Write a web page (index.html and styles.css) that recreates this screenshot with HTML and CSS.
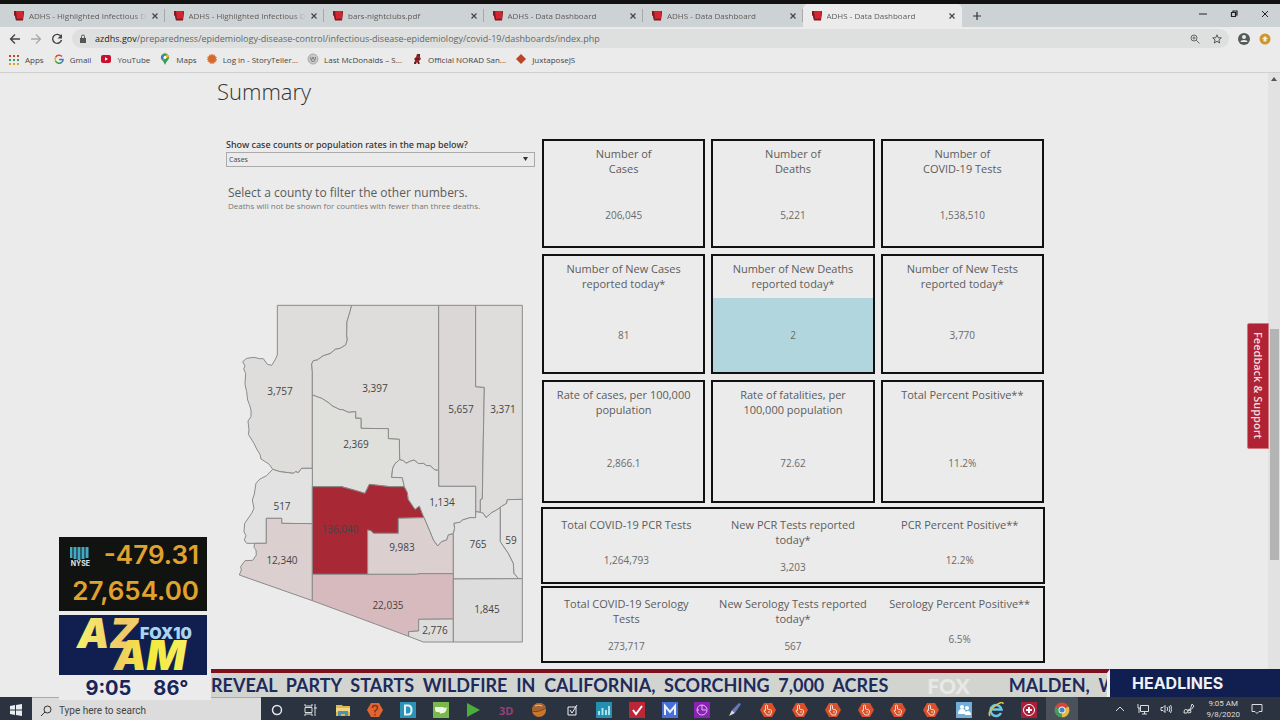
FILE: index.html
```
<!DOCTYPE html>
<html lang="en">
<head>
  <meta charset="UTF-8">
  <meta name="viewport" content="width=device-width, initial-scale=1.0">
  <title>ADHS - Data Dashboard</title>
  <link rel="stylesheet" href="styles.css">
</head>
<body>
  <!-- shared icons -->
  <svg class="defs" width="0" height="0">
    <symbol id="adhs" viewBox="0 0 12 12">
      <path d="M1 1h10l-1 9H3L2 6 1 5z" fill="#cf2630"/>
      <path d="M1 1h2l1 8 6-.5v2H3L2 6 1 5zM10 2l1-1-1 9z" fill="#7a1a22"/>
    </symbol>
    <symbol id="close" viewBox="0 0 8 8">
      <path d="M1.500 1.500l5 5M6.500 1.500l-5 5" stroke="#444" stroke-width="1.200"/>
    </symbol>
    <symbol id="hex" viewBox="0 0 16 16">
      <path d="M4 1h8l4 7-4 7H4L0 8z" fill="#d9502a"/>
      <path d="M5.500 8.500V3.500q1-1 2 0V7l3.500 1q.8 .5 .5 2L10.500 13H7L4 9q.5-1.500 1.500-.5M9 9v2" fill="none" stroke="#f6d9cc"/>
    </symbol>
  </svg>

  <header class="browser">
    <div class="tab-bar">
      <div class="tabs">
        <div class="tab"><svg class="fav"><use href="#adhs"/></svg><span>ADHS - Highlighted Infectious Di</span><button aria-label="Close tab"><svg><use href="#close"/></svg></button></div>
        <div class="tab"><svg class="fav"><use href="#adhs"/></svg><span>ADHS - Highlighted Infectious Di</span><button aria-label="Close tab"><svg><use href="#close"/></svg></button></div>
        <div class="tab"><svg class="fav"><use href="#adhs"/></svg><span>bars-nightclubs.pdf</span><button aria-label="Close tab"><svg><use href="#close"/></svg></button></div>
        <div class="tab"><svg class="fav"><use href="#adhs"/></svg><span>ADHS - Data Dashboard</span><button aria-label="Close tab"><svg><use href="#close"/></svg></button></div>
        <div class="tab"><svg class="fav"><use href="#adhs"/></svg><span>ADHS - Data Dashboard</span><button aria-label="Close tab"><svg><use href="#close"/></svg></button></div>
        <div class="tab active"><svg class="fav"><use href="#adhs"/></svg><span>ADHS - Data Dashboard</span><button aria-label="Close tab"><svg><use href="#close"/></svg></button></div>
      </div>
      <button class="new-tab" aria-label="New tab"><svg width="10" height="10" viewBox="0 0 10 10"><path d="M5 1v8M1 5h8" stroke="#333" stroke-width="1.200"/></svg></button>
      <div class="window-buttons">
        <button aria-label="Minimize"><svg viewBox="0 0 8 8"><path d="M0 4h8" stroke="#222"/></svg></button>
        <button aria-label="Restore"><svg viewBox="0 0 8 8"><path d="M1.500 2.500h4v4h-4zM3 2.500V1h4v4H5.500" fill="none" stroke="#222" stroke-width="1.200"/></svg></button>
        <button aria-label="Close"><svg viewBox="0 0 8 8"><path d="M1 1l6 6M7 1L1 7" stroke="#222"/></svg></button>
      </div>
    </div>

    <div class="toolbar">
      <button aria-label="Back"><svg viewBox="0 0 12 12"><path d="M11 6H2M6 1.500L1.500 6 6 10.500" fill="none" stroke="#444" stroke-width="1.300"/></svg></button>
      <button aria-label="Forward"><svg viewBox="0 0 12 12"><path d="M1 6h9M6 1.500L10.500 6 6 10.500" fill="none" stroke="#aaa" stroke-width="1.300"/></svg></button>
      <button aria-label="Reload"><svg viewBox="0 0 12 12"><path d="M10 3.500A4.500 4.500 0 1 0 10.500 7" fill="none" stroke="#444" stroke-width="1.400"/><path d="M11 1v4.500H6.500z" fill="#444"/></svg></button>
      <div class="address">
        <svg width="8" height="9" viewBox="0 0 8 9"><path d="M1 4h6v5H1z" fill="#555"/><path d="M2.500 4V2.500a1.500 1.500 0 0 1 3 0V4" fill="none" stroke="#555"/></svg>
        <p><b>azdhs.gov</b>/preparedness/epidemiology-disease-control/infectious-disease-epidemiology/covid-19/dashboards/index.php</p>
        <svg width="10" height="10" viewBox="0 0 10 10"><circle cx="4" cy="4" r="3" fill="none" stroke="#666"/><path d="M6.200 6.200L9.500 9.500M2.500 4h3M4 2.500v3" stroke="#666"/></svg>
        <svg width="10" height="10" viewBox="0 0 10 10"><path d="M5 .8l1.200 2.900 3.100.2-2.400 2 .8 3.100L5 7.300 2.300 9l.8-3.100-2.400-2 3.100-.2z" fill="none" stroke="#555"/></svg>
      </div>
      <button aria-label="Profile"><svg viewBox="0 0 12 12"><circle cx="6" cy="6" r="6" fill="#555b5b"/><circle cx="6" cy="4" r="2" fill="#ebebeb"/><path d="M2.500 9q0-2 3.500-2t3.500 2z" fill="#ebebeb"/></svg></button>
      <button aria-label="Update"><svg viewBox="0 0 12 12"><circle cx="6" cy="6" r="5.500" fill="#cf962c"/><path d="M6 3l3 3H7.500v2.500h-3V6H3z" fill="#f3ecd8"/></svg></button>
    </div>

    <nav class="bookmarks">
      <a href="#"><svg viewBox="0 0 12 12"><path d="M1 3h10" stroke="#c9412f" stroke-width="2" stroke-dasharray="2 2"/><path d="M1 7h10" stroke="#3f9a55" stroke-width="2" stroke-dasharray="2 2"/><path d="M1 11h10" stroke="#d9a529" stroke-width="2" stroke-dasharray="2 2"/></svg>Apps</a>
      <a href="#"><svg viewBox="0 0 12 12" fill="none" stroke-width="1.600"><path d="M9 3.500a4 4 0 0 0-6.500 1" stroke="#dc4a3d"/><path d="M2.500 4.500a4 4 0 0 0 0 3.500" stroke="#e6b325"/><path d="M2.500 8A4 4 0 0 0 9 9" stroke="#3a9b55"/><path d="M9 9q1-1 1-2.500H6" stroke="#4377d8"/></svg>Gmail</a>
      <a href="#"><svg viewBox="0 0 12 12"><rect x="1" y="2" width="10" height="8" rx="2" fill="#c8102e"/><path d="M5 4.200v3.600L8 6z" fill="#fff"/></svg>YouTube</a>
      <a href="#"><svg viewBox="0 0 12 12"><path d="M6 12Q5 9 3 7a4 4 0 1 1 6 0Q7 9 6 12z" fill="#3c9d58"/><path d="M3 7a4 4 0 0 1 0-5l3 2.500z" fill="#3f76d0"/><path d="M3 7l5-6q2 1 2 3z" fill="#e3b22f"/><circle cx="6" cy="4.500" r="1.400" fill="#fff"/></svg>Maps</a>
      <a href="#"><svg viewBox="0 0 12 12"><circle cx="6" cy="6" r="4" fill="#d9682b"/><circle cx="6" cy="6" r="4.500" fill="none" stroke="#d9682b" stroke-dasharray="1.500 1"/></svg>Log in - StoryTeller...</a>
      <a href="#"><svg viewBox="0 0 12 12"><circle cx="6" cy="6" r="5" fill="#c9c9c9" stroke="#aaa"/><path d="M3 4h6v2L7 9H5L3 6z" fill="#888"/><path d="M4 5h1M7 5h1M5 7h2" stroke="#eee"/></svg>Last McDonalds – S...</a>
      <a href="#"><svg viewBox="0 0 12 12"><path d="M6 1h3v3l1 2-2 2v3H7L6 9l-1 2H3l1-4-1-1 2-2z" fill="#9c2226"/><path d="M4 6h4M7 2h2M3 10h2M7 10h2" stroke="#222"/></svg>Official NORAD San...</a>
      <a href="#"><svg viewBox="0 0 12 12"><path d="M6 1l5 5-5 5-5-5z" fill="#bb4526"/></svg>JuxtaposeJS</a>
    </nav>
  </header>

  <div class="viewport">
    <main>
      <h1>Summary</h1>
      <div class="dashboard">
        <section class="map-panel">
          <label for="measure">Show case counts or population rates in the map below?</label>
          <div class="select">
            <select id="measure">
              <option>Cases</option>
              <option>Rates</option>
            </select>
            <svg width="5" height="4" viewBox="0 0 5 4"><path d="M0 0h5L2.500 4z" fill="#333"/></svg>
          </div>
          <p class="hint">Select a county to filter the other numbers.</p>
          <p class="note">Deaths will not be shown for counties with fewer than three deaths.</p>

          <svg class="map" viewBox="6 5 290 345">
            <g class="counties" transform="scale(0.33333)">
              <path fill="#dedddb" d="M142 31H365L360 50 351 80 350 120 352 135 347 150 330 160 316 163 300 176 280 182 262 195 250 197 245 207 247 230V520H215L205 533 197 530 190 535 175 533 150 530 128 523 118 508 93 492 90 478 80 462 72 445 55 418 57 405 54 378 63 365 63 345 58 328 53 315 50 290 45 268 47 235 41 222 45 213 38 200 50 190 72 187 88 191 100 191 112 208 125 211 135 195 142 180Z"/>
              <path fill="#dedddb" d="M365 31H626V526L615 525 600 512 590 512 580 505 566 506 552 495 540 499 528 505 520 497 509 494 508 433 475 431V401L393 400V370L377 369V350L355 352 338 344 330 344 305 332 300 326 275 310 247 300V230L245 207 250 197 262 195 280 182 300 176 316 163 330 160 347 150 352 135 350 120 351 80 360 50Z"/>
              <path fill="#dcd7d7" d="M626 31H737V275L763 277 760 430 757 612 751 614V652L737 650V574H626Z"/>
              <path fill="#dedddb" d="M737 31H877V613L832 614 830 625 815 634 800 645 785 653 768 668 760 655 751 652V614L757 612 760 430 763 277 737 275Z"/>
              <path fill="#dfdfdb" d="M247 300L275 310 300 326 305 332 330 344 338 344 355 352 377 350V370L393 370V400L475 401V431L508 433 509 494 495 506 488 520 485 547 517 548 523 575H480L418 568 405 595 375 586 335 575H247Z"/>
              <path fill="#e2e2e2" d="M128 523L150 530 175 533 190 535 197 530 205 533 215 520H247V686L155 685V670H109V745H50L43 735 48 722 42 710 44 685 65 655 72 640 67 615 73 597 78 565 90 552 110 542Z"/>
              <path fill="#dccfcf" d="M109 670H155V685L247 686V917L28 840 34 825 32 815 45 797 68 796 79 780 78 765 72 757 74 745H109Z"/>
              <path fill="#a82836" d="M247 575H335L375 586 405 595 418 568 480 575H523L532 592 535 613 555 643 568 633 582 668 505 670V715H430L424 708 413 705V838H247Z"/>
              <path fill="#e0e0e0" d="M509 494L520 497 528 505 540 499 552 495 566 506 580 505 590 512 600 512 615 525 626 526V574H737V668L720 668 698 675 690 682 672 685 674 700 670 716 655 720 650 735 635 740 623 753 610 735 600 710 582 668 568 633 555 643 535 613 532 592 523 575 517 548 485 547 488 520 495 506Z"/>
              <path fill="#dccfcf" d="M413 705L424 708 430 715H505V670L582 668 600 710 610 735 623 753 635 740 650 735 655 720 670 716V836L570 836 560 838H413Z"/>
              <path fill="#e1e1e1" d="M670 852V716L674 700 672 685 690 682 698 675 720 668H737V650L751 652 760 655 768 668 785 653 800 645 811 637V740L835 775 850 805 852 835 866 851Z"/>
              <path fill="#e3e3e3" d="M811 637L815 634 830 625 832 614 877 613V851H866L852 835 850 805 835 775 811 740Z"/>
              <path fill="#d7babe" d="M247 838H560L570 836H670V972L566 973V1008L536 1010V1024L247 917Z"/>
              <path fill="#dedddd" d="M566 973L670 972V1041H580L536 1024V1010L566 1008Z"/>
              <path fill="#dddddd" d="M670 852L877 851V1041H670Z"/>
            </g>
            <g class="counts">
              <text x="50" y="100">3,757</text>
              <text x="145" y="97">3,397</text>
              <text x="231" y="118">5,657</text>
              <text x="273" y="118">3,371</text>
              <text x="126" y="153">2,369</text>
              <text x="52" y="215">517</text>
              <text x="110" y="238">136,040</text>
              <text x="212" y="211">1,134</text>
              <text x="52" y="269">12,340</text>
              <text x="172" y="256">9,983</text>
              <text x="248" y="253">765</text>
              <text x="281" y="249">59</text>
              <text x="158" y="314">22,035</text>
              <text x="257" y="318">1,845</text>
              <text x="205" y="339">2,776</text>
            </g>
          </svg>
        </section>

        <section class="stats">
          <div class="row row-totals">
            <article class="card"><h2>Number of<br>Cases</h2><p>206,045</p></article>
            <article class="card"><h2>Number of<br>Deaths</h2><p>5,221</p></article>
            <article class="card"><h2>Number of<br>COVID-19 Tests</h2><p>1,538,510</p></article>
          </div>
          <div class="row row-today">
            <article class="card"><h2>Number of New Cases<br>reported today*</h2><p>81</p></article>
            <article class="card selected"><h2>Number of New Deaths<br>reported today*</h2><p>2</p></article>
            <article class="card"><h2>Number of New Tests<br>reported today*</h2><p>3,770</p></article>
          </div>
          <div class="row row-rates">
            <article class="card"><h2>Rate of cases, per 100,000<br>population</h2><p>2,866.1</p></article>
            <article class="card"><h2>Rate of fatalities, per<br>100,000 population</h2><p>72.62</p></article>
            <article class="card"><h2>Total Percent Positive**</h2><p>11.2%</p></article>
          </div>
          <div class="band">
            <article><h2>Total COVID-19 PCR Tests</h2><p>1,264,793</p></article>
            <article><h2>New PCR Tests reported<br>today*</h2><p>3,203</p></article>
            <article><h2>PCR Percent Positive**</h2><p>12.2%</p></article>
          </div>
          <div class="band">
            <article><h2>Total COVID-19 Serology<br>Tests</h2><p>273,717</p></article>
            <article><h2>New Serology Tests reported<br>today*</h2><p>567</p></article>
            <article><h2>Serology Percent Positive**</h2><p>6.5%</p></article>
          </div>
        </section>
      </div>
    </main>
    <div class="scrollbar">
      <svg width="6" height="4" viewBox="0 0 6 4"><path d="M0 4h6L3 0z" fill="#555"/></svg>
      <div class="thumb"></div>
    </div>
    <button class="feedback">Feedback &amp; Support</button>
  </div>

  <footer class="taskbar">
    <button class="start" aria-label="Start"><svg width="12" height="12" viewBox="0 0 12 12"><path d="M0 2l5-1v4.500H0zM6 1l6-1v5.500H6zM0 6.500h5V11l-5-1zM6 6.500h6V12l-6-1z" fill="#e8eef0"/></svg></button>
    <div class="search">
      <svg width="12" height="12" viewBox="0 0 12 12"><circle cx="7.500" cy="4.500" r="3.500" fill="none" stroke="#333"/><path d="M5 7L1 11" stroke="#333"/></svg>
      <input type="text" placeholder="Type here to search" aria-label="Search">
    </div>
    <div class="apps">
      <button aria-label="Cortana"><svg viewBox="0 0 16 16"><circle cx="8" cy="8" r="4.500" fill="none" stroke="#e6e6e6" stroke-width="1.500"/></svg></button>
      <button aria-label="Task view"><svg viewBox="0 0 16 16"><path d="M3 5.500h7v5H3zM3 2v2h7V2M3 14v-2h7v2M13 2v12M12 6h3" fill="none" stroke="#ddd"/></svg></button>
      <button aria-label="File Explorer"><svg viewBox="0 0 16 16"><path d="M1 3h6l1 1h7v10H1z" fill="#e0b94c"/><path d="M1 6h14v4H1z" fill="#f0d583"/><path d="M3 14v-5h10v5h-3v-2H6v2z" fill="#4d93b8"/></svg></button>
      <button aria-label="Help"><svg viewBox="0 0 16 16"><path d="M4 1h8l4 7-4 7H4L0 8z" fill="#e0652f"/><path d="M5.500 6q0-2.500 2.500-2.500T10.500 6Q10.500 7.500 8 9v1.500M8 12v1.500" fill="none" stroke="#8c3118" stroke-width="1.500"/></svg></button>
      <button aria-label="Dashboard"><svg viewBox="0 0 16 16"><path d="M0 0h16v16H0z" fill="#2c93b7"/><path d="M5 3.500h3q3.500 0 3.500 4.500T8 12.500H5z" fill="none" stroke="#e6f4f7" stroke-width="2"/></svg></button>
      <button aria-label="US map"><svg viewBox="0 0 16 16"><path d="M0 0h16v16H0z" fill="#79b84b"/><path d="M2 5h8l2 1 2-1-1 4-2 2H9l-1 1-2-2H3L2 8z" fill="#eef6e3"/></svg></button>
      <button aria-label="Play"><svg viewBox="0 0 16 16"><path d="M2 1l13 7-13 7z" fill="#4cae3a"/></svg></button>
      <button aria-label="3D"><span class="three-d">3D</span></button>
      <button aria-label="Globe"><svg viewBox="0 0 16 16"><circle cx="8" cy="8" r="7" fill="#c9762c"/><path d="M1 8q6 3 14-2-1-5-7-5T1 8" fill="#a8642c"/><path d="M1 9q6 2 14-3" stroke="#7c4420" fill="none"/><path d="M4 4q4-2 7 0" stroke="#edc594" fill="none"/></svg></button>
      <button aria-label="Checklist"><svg viewBox="0 0 16 16"><path d="M4 5h8v8H4zM6 8l2 3 5-8" fill="none" stroke="#eee"/></svg></button>
      <button aria-label="Charts"><svg viewBox="0 0 16 16"><path d="M0 0h16v16H0z" fill="#2490b0"/><path d="M3 13V9M6.500 13V6M10 13V8M13 13V4" stroke="#a9e4ee" stroke-width="2"/></svg></button>
      <button aria-label="Tasks"><svg viewBox="0 0 16 16"><path d="M0 0h16v16H0z" fill="#bd2636"/><path d="M4 8l3 4 6-8" fill="none" stroke="#fff" stroke-width="2"/></svg></button>
      <button aria-label="Mail"><svg viewBox="0 0 16 16"><path d="M0 0h16v16H0z" fill="#4770d6"/><path d="M3 13V4l5 6 5-6v9" fill="none" stroke="#e8eefb" stroke-width="2"/></svg></button>
      <button aria-label="Clock"><svg viewBox="0 0 16 16"><path d="M0 0h16v16H0z" fill="#8a22b4"/><circle cx="8" cy="8" r="5" fill="none" stroke="#e4b8f0"/><path d="M8 3v5h4M3 8h2" stroke="#e4b8f0" fill="none"/></svg></button>
      <button aria-label="Pen"><svg viewBox="0 0 16 16"><path d="M2 14l3-6 3 3z" fill="#ddd"/><path d="M5 8l7-7 2 1-6 9z" fill="#6878ba"/></svg></button>
      <button aria-label="Control 1"><svg><use href="#hex"/></svg></button>
      <button aria-label="Control 2"><svg><use href="#hex"/></svg></button>
      <button aria-label="Control 3"><svg><use href="#hex"/></svg></button>
      <button aria-label="Control 4"><svg><use href="#hex"/></svg></button>
      <button aria-label="Control 5"><svg><use href="#hex"/></svg></button>
      <button aria-label="Control 6"><svg><use href="#hex"/></svg></button>
      <button aria-label="People"><svg viewBox="0 0 16 16"><path d="M0 0h16v16H0z" fill="#71afd9"/><circle cx="6" cy="5" r="2" fill="#fff"/><circle cx="11" cy="6" r="2" fill="#fff"/><path d="M2 12q0-5 4-5t4 5zM9 13q0-4 3-4t3 4z" fill="#fff"/></svg></button>
      <button aria-label="Internet Explorer"><svg viewBox="0 0 16 16"><path d="M13 11a5.500 5.500 0 1 1 .5-3.500H4" fill="none" stroke="#6dc6e4" stroke-width="2.500"/><path d="M2 14Q-1 10 7 4t8-2" fill="none" stroke="#e1c545" stroke-width="1.500"/></svg></button>
      <button aria-label="Medical"><svg viewBox="0 0 16 16"><path d="M0 0h16v16H0z" fill="#ab1e38"/><circle cx="8" cy="8" r="5.500" fill="none" stroke="#fff"/><path d="M8 5v6M5 8h6" stroke="#fff" stroke-width="2"/></svg></button>
      <button class="current" aria-label="Chrome"><svg viewBox="0 0 16 16"><path d="M8 8L1.500 4.500A7.300 7.300 0 0 1 14.500 4.500z" fill="#d5463a"/><path d="M8 8l6.500-3.500A7.300 7.300 0 0 1 8 15.300z" fill="#e5bd3a"/><path d="M8 8v7.300A7.300 7.300 0 0 1 1.500 4.500z" fill="#469c56"/><circle cx="8" cy="8" r="3.500" fill="#eee"/><circle cx="8" cy="8" r="2.500" fill="#4680cf"/></svg></button>
    </div>
    <div class="tray">
      <svg viewBox="0 0 12 12"><path d="M2 8l4-4 4 4" fill="none" stroke="#ddd"/></svg>
      <svg viewBox="0 0 12 12"><path d="M3.500 2.500h8v6h-8zM5 11h5M7.500 9v2M1 1v4h2M2 5v5" fill="none" stroke="#ddd"/></svg>
      <svg viewBox="0 0 12 12"><path d="M1 4.500h2l2-2v7l-2-2H1zM7 4q1.500 2 0 4M9 3q2 3 0 6M10.500 2q3 4 0 8" fill="none" stroke="#ddd"/></svg>
      <svg viewBox="0 0 12 12"><path d="M1 10q0-5 3-3t5-6l2 2q-2 4-6 5M1 10q4 1 4-2t3 0q1 2-3 2" fill="none" stroke="#ddd"/></svg>
      <p>9:05 AM<br>9/8/2020</p>
      <svg viewBox="0 0 12 12"><path d="M1 1.500h10v7H8l-2 2-2-2H1z" fill="none" stroke="#ddd"/></svg>
    </div>
  </footer>

  <!-- station graphics laid over the desktop -->
  <div class="ticker">
    <div class="crawl">
      <p>REVEAL  PARTY  STARTS  WILDFIRE  IN  CALIFORNIA,  SCORCHING  7,000  ACRES</p>
      <strong>FOX</strong>
      <p>MALDEN,  W</p>
    </div>
    <h2>HEADLINES</h2>
  </div>

  <aside class="bug">
    <div class="market">
      <div class="exchange">
        <svg width="20" height="13" viewBox="0 0 20 13"><path d="M1 0v11M5 0v12M9 0v13M13 0v12M17 0v11" stroke="#45a9c4" stroke-width="3"/></svg>
        <span>NYSE</span>
      </div>
      <p>-479.31</p>
      <p>27,654.00</p>
    </div>
    <svg class="logo" viewBox="0 0 148 60">
      <defs>
        <linearGradient id="gold"><stop offset="0" stop-color="#f4f26e"/><stop offset="0.750" stop-color="#f1c866"/><stop offset="1" stop-color="#eed36a"/></linearGradient>
        <linearGradient id="lemon"><stop offset="0" stop-color="#efc76a"/><stop offset="0.500" stop-color="#f4ea3c"/><stop offset="1" stop-color="#f5ef62"/></linearGradient>
      </defs>
      <text class="az" x="18" y="33" fill="url(#gold)">AZ</text>
      <text class="az" x="55" y="55" fill="url(#lemon)">AM</text>
      <text class="fox10" x="81" y="24">FOX10</text>
    </svg>
    <div class="weather"><span>9:05</span><span>86°</span></div>
  </aside>
</body>
</html>
```
FILE: styles.css
```
* {
  box-sizing: border-box;
}
body {
  margin: 0;
  min-height: 100vh;
  display: flex;
  flex-direction: column;
  position: relative;
  overflow: hidden;
  border-top: 4px solid #111;
  font-family: "Open Sans", sans-serif;
  background: #ebebeb;
  color: #5c5c5c;
}
h1, h2, p {
  margin: 0;
  font-weight: inherit;
}
button {
  border: none;
  padding: 0;
  background: none;
  font-family: inherit;
  cursor: pointer;
}
svg {
  display: block;
  flex: none;
}
.defs {
  position: absolute;
}

/* browser */
.browser {
  border-bottom: 1px solid #cfcfcf;
  font-size: 9px;
}
.tab-bar {
  display: flex;
  height: 23px;
  padding-left: 5px;
  background: #cdd2d4;
}
.tabs {
  display: flex;
  flex: 0 1 957px;
  min-width: 0;
}
.tab {
  display: flex;
  flex: 1;
  min-width: 0;
  align-items: center;
  gap: 4px;
  padding: 0 6px 0 8px;
  position: relative;
  font-size: 8px;
}
.tab::after {
  content: "";
  position: absolute;
  right: 0;
  height: 13px;
  border-right: 1px solid #a5a9aa;
}
.tab.active {
  background: #ebebeb;
  border-radius: 5px 5px 0 0;
}
.tab.active::after {
  display: none;
}
.tab span {
  flex: 1;
  overflow: hidden;
  white-space: nowrap;
  -webkit-mask-image: linear-gradient(to right, #000 88%, transparent);
  mask-image: linear-gradient(to right, #000 88%, transparent);
}
.tab .fav {
  width: 12px;
  height: 12px;
}
.tab button svg,
.window-buttons svg {
  width: 8px;
  height: 8px;
}
.new-tab {
  margin-left: 10px;
}
.window-buttons {
  display: flex;
  gap: 23px;
  margin-left: auto;
  padding: 0 11px 4px 0;
}
.toolbar {
  display: flex;
  align-items: center;
  height: 23px;
  padding: 0 9px;
  gap: 9px;
}
.toolbar button svg {
  width: 12px;
  height: 12px;
}
.address {
  display: flex;
  flex: 1;
  min-width: 0;
  align-items: center;
  gap: 12px;
  height: 19px;
  padding: 0 7px;
  border-radius: 10px;
  background: #dde0df;
  color: #666;
}
.address p {
  flex: 1;
  overflow: hidden;
  white-space: nowrap;
  margin-left: -4px;
}
.address b {
  font-weight: normal;
  color: #222;
}
.bookmarks {
  display: flex;
  align-items: center;
  gap: 9px;
  height: 22px;
  padding: 0 8px 4px;
}
.bookmarks a {
  display: flex;
  align-items: center;
  gap: 5px;
  color: #444;
  text-decoration: none;
  white-space: nowrap;
  font-size: 8px;
}
.bookmarks svg {
  width: 12px;
  height: 12px;
}

/* page */
.viewport {
  display: flex;
  flex: 1;
  position: relative;
}
main {
  flex: 0 1 834px;
  margin: 0 auto;
  padding: 2px 7px 20px 0;
}
h1 {
  margin-bottom: 32px;
  font-size: 22px;
  line-height: 32px;
  font-weight: 300;
  color: #333;
}
.dashboard {
  display: flex;
  justify-content: space-between;
  padding-left: 9px;
}
.map-panel {
  flex: 0 1 309px;
}
.map-panel label {
  display: block;
  font-family: "Noto Sans", sans-serif;
  font-size: 9px;
  line-height: 12px;
  font-weight: 500;
  color: #333;
}
.select {
  position: relative;
  margin: 1px 0 17px;
}
.select select {
  display: block;
  width: 100%;
  height: 15px;
  padding: 0 2px;
  appearance: none;
  border: 1px solid #aaa;
  border-radius: 0;
  background: transparent;
  color: #444;
  font-family: inherit;
  font-size: 7px;
}
.select svg {
  position: absolute;
  right: 7px;
  top: 5px;
}
.hint {
  padding-left: 2px;
  font-size: 12px;
  line-height: 18px;
}
.note {
  padding-left: 2px;
  font-size: 8px;
  line-height: 8px;
  color: #777;
}
.map {
  width: 290px;
  max-width: 100%;
  margin: 90px auto 0;
}
.counties path {
  stroke: #8b8b8b;
  stroke-width: 3;
}
.counts text {
  font-size: 10px;
  text-anchor: middle;
  fill: #444;
}
.stats {
  flex: 0 1 502px;
}
.row {
  display: grid;
  grid-template-columns: repeat(3, 1fr);
  gap: 6px;
  margin-bottom: 6px;
}
.row-totals {
  min-height: 109px;
}
.row-today {
  min-height: 120px;
}
.row-rates {
  min-height: 123px;
  margin-bottom: 4px;
}
.card,
.band article {
  display: flex;
  flex-direction: column;
  text-align: center;
}
.card {
  border: 2px solid #111;
}
.card h2,
.band h2 {
  font-size: 11px;
  line-height: 15px;
}
.card h2 {
  min-height: 42px;
  padding-top: 5px;
}
.card p,
.band p {
  display: flex;
  flex: 1;
  align-items: center;
  justify-content: center;
  font-size: 10px;
  color: #6a6a6a;
}
.selected p {
  background: #b1d6dd;
}
.band {
  display: grid;
  grid-template-columns: repeat(3, 1fr);
  min-height: 77px;
  margin: 0 -1px 2px;
  padding-top: 8px;
  border: 2px solid #111;
}
.band p {
  padding-top: 5px;
}
.scrollbar {
  flex: none;
  width: 12px;
  padding: 4px 3px;
  position: relative;
  background: #e2e2e2;
}
.thumb {
  position: absolute;
  top: 41%;
  left: 2px;
  width: 9px;
  height: 37%;
  background: #b4b4b4;
}
.feedback {
  position: absolute;
  top: 40%;
  right: 11px;
  width: 22px;
  height: 126px;
  writing-mode: vertical-rl;
  background: #b02334;
  border: 1px solid #d5757f;
  border-radius: 2px 0 0 2px;
  color: #f3dede;
  font-size: 11px;
  font-weight: 600;
}

/* taskbar */
.taskbar {
  display: flex;
  height: 23px;
  background: #2b3340;
  color: #ddd;
}
.start {
  width: 32px;
  display: flex;
  align-items: center;
  justify-content: center;
  padding-top: 3px;
}
.search {
  display: flex;
  align-items: center;
  flex: 0 1 229px;
  gap: 7px;
  padding: 3px 8px 0;
  background: #dcdcdc;
  border-top: 1px solid #aaa;
}
.search input {
  width: 100%;
  min-width: 0;
  padding: 0;
  border: none;
  background: none;
  font-family: Roboto, sans-serif;
  font-size: 10px;
}
.search input::placeholder {
  color: #444;
}
.apps {
  display: flex;
  flex: 0 1 817px;
  min-width: 0;
}
.apps button {
  display: flex;
  flex: 1;
  align-items: center;
  justify-content: center;
  padding-top: 3px;
}
.apps svg {
  width: 16px;
  height: 16px;
}
.apps .current {
  background: #4a515b;
}
.three-d {
  color: #9b3f74;
  font-size: 11px;
  font-weight: bold;
}
.tray {
  display: flex;
  align-items: center;
  gap: 11px;
  margin-left: auto;
  padding: 0 17px 0 0;
}
.tray svg {
  width: 12px;
  height: 12px;
}
.tray p {
  font-family: Roboto, sans-serif;
  font-size: 8px;
  line-height: 11px;
  text-align: center;
}

/* broadcast graphics */
.ticker {
  display: flex;
  position: absolute;
  left: 211px;
  right: 0;
  bottom: 23px;
  height: 28px;
  font-family: Inter, sans-serif;
}
.crawl {
  display: flex;
  flex: 1;
  align-items: center;
  gap: 39px;
  overflow: hidden;
  border-top: 4px solid #7d101c;
  border-right: 3px solid #f0f0f0;
  background: #d2d4d0;
  color: #1d2a5c;
  font-family: Lato, sans-serif;
  font-size: 18px;
  font-weight: 700;
  white-space: pre;
}
.crawl strong {
  color: #e8e9e6;
  font-size: 21px;
  font-weight: 900;
}
.ticker h2 {
  flex: none;
  width: 170px;
  padding-left: 22px;
  background: #101f50;
  color: #eef0f6;
  font-size: 16px;
  line-height: 28px;
  font-weight: 700;
}
.bug {
  position: absolute;
  left: 59px;
  bottom: 20px;
  width: 152px;
  padding-right: 4px;
  background: #ebebeb;
  font-family: Inter, sans-serif;
}
.market {
  position: relative;
  height: 74px;
  margin-bottom: 4px;
  padding: 0 8px;
  background: #10130f;
  color: #e0a22e;
  font-size: 26px;
  line-height: 36px;
  font-weight: 600;
  text-align: right;
}
.exchange {
  position: absolute;
  left: 11px;
  top: 10px;
  color: #e6e6e6;
  font-size: 7px;
  line-height: 7px;
  font-weight: 700;
}
.logo {
  width: 148px;
  height: 60px;
  background: #101f50;
}
.az {
  font-size: 41px;
  font-weight: 900;
  font-style: italic;
}
.fox10 {
  fill: #a9d5ee;
  font-size: 16px;
  font-weight: 900;
}
.weather {
  display: flex;
  justify-content: center;
  gap: 22px;
  height: 25px;
  padding-left: 8px;
  color: #18255a;
  font-size: 20px;
  line-height: 26px;
  font-weight: 700;
}
```
